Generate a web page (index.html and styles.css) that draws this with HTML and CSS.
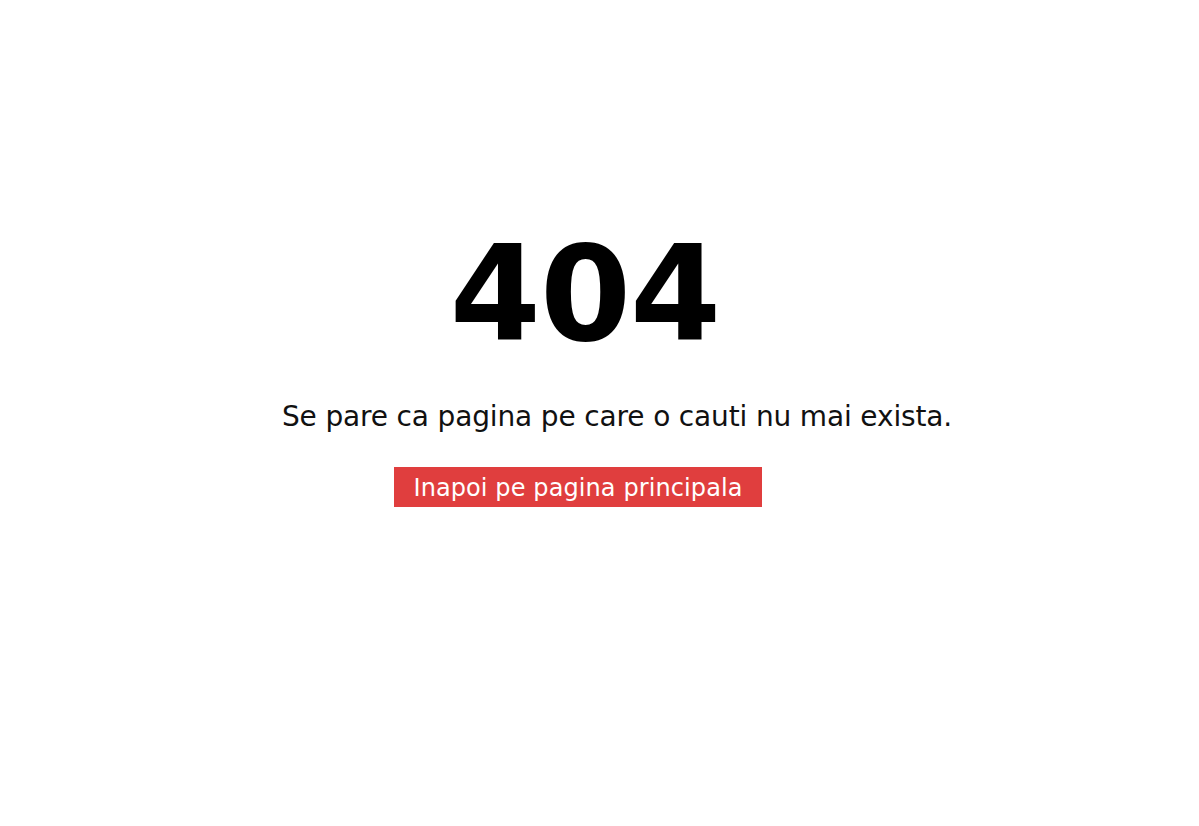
FILE: index.html
```html
<!DOCTYPE html>
<html lang="ro">
<head>
<meta charset="utf-8">
<title>404</title>
<link rel="stylesheet" href="styles.css">
</head>
<body>
<main class="page">
  <h1 class="code">404</h1>
  <p class="message">Se pare ca pagina pe care o cauti nu mai exista.</p>
  <a class="home-btn" href="#">Inapoi pe pagina principala</a>
</main>
</body>
</html>
```

FILE: styles.css
```css
html, body {
  margin: 0;
  padding: 0;
  background: #ffffff;
}
body {
  font-family: "DejaVu Sans", "Noto Sans", sans-serif;
  color: #111111;
}
.page {
  display: flex;
  flex-direction: column;
  align-items: center;
  padding-top: 220px;
}
.code {
  margin: 0 0 0 -29px;
  font-size: 131px;
  line-height: 150px;
  font-weight: 700;
  color: #000000;
  letter-spacing: -1px;
}
.message {
  margin: 29px 0 0 35px;
  font-size: 28px;
  line-height: 36px;
  font-weight: 400;
  letter-spacing: -0.15px;
}
.home-btn {
  margin: 32px 0 0 -43px;
  display: block;
  width: 368px;
  height: 40px;
  box-sizing: border-box;
  background: #e03e3e;
  color: #ffffff;
  text-decoration: none;
  font-size: 24px;
  line-height: 42px;
  text-align: center;
  letter-spacing: 0.1px;
}
```
